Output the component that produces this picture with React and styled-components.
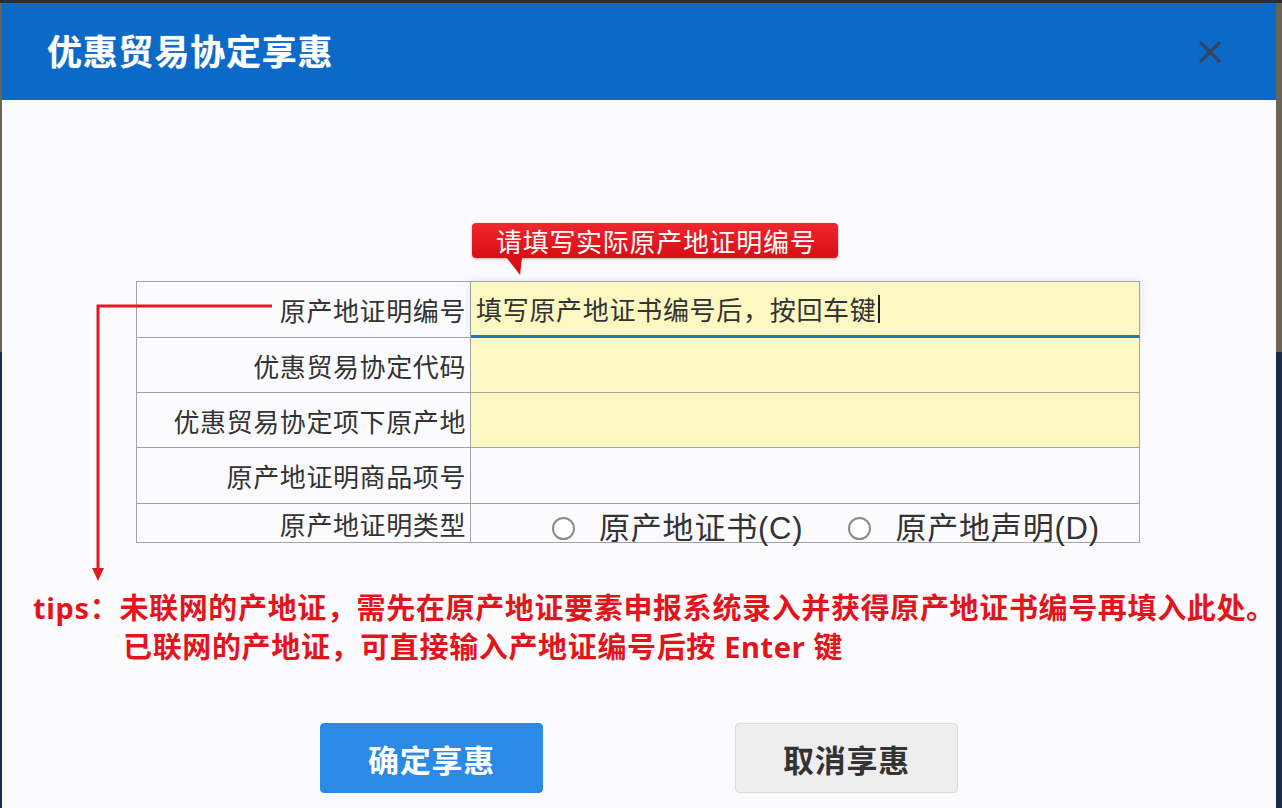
import React from "react";
import styled, { createGlobalStyle } from "styled-components";

const Global = createGlobalStyle`
  html, body { margin: 0; padding: 0; }
  body {
    width: 1282px;
    height: 808px;
    overflow: hidden;
    background: linear-gradient(to bottom, #2e2c2c 0 3px, #6b6358 3px 352px, #1d2c46 352px);
    font-family: "Noto Sans", "Noto Sans CJK SC", sans-serif;
  }
`;

const CJK = `"Noto Sans CJK SC", "Noto Sans", sans-serif`;

const Dialog = styled.div`
  position: relative;
  width: 1274px;
  height: 805px;
  margin: 3px 0 0 2px;
  display: flex;
  flex-direction: column;
  background: #fbfbfd;
`;

const Header = styled.div`
  height: 97px;
  flex: none;
  background: #0b69c7;
  display: flex;
  align-items: center;
  justify-content: space-between;
  padding: 0 52px 0 45px;
`;

const Title = styled.h1`
  margin: 0 0 4px;
  font-family: ${CJK};
  font-size: 35px;
  font-weight: 700;
  color: #ffffff;
  letter-spacing: 0.8px;
  text-shadow: 0 0 1px rgba(255, 255, 255, 0.6);
`;

const Close = styled.button`
  width: 28px;
  height: 28px;
  padding: 0;
  border: 0;
  background: transparent;
  display: flex;
  align-items: center;
  justify-content: center;
`;

const Body = styled.div`
  flex: 1;
  display: flex;
  flex-direction: column;
  padding-top: 123px;
`;

const Form = styled.div`
  margin-left: 134px;
  width: 1004px;
  display: flex;
  flex-direction: column;
`;

const Callout = styled.div`
  position: relative;
  align-self: flex-start;
  margin-left: 336px;
  margin-bottom: 23px;
  height: 35px;
  padding: 0 22px 0 24px;
  display: flex;
  align-items: center;
  border-radius: 4px;
  background: linear-gradient(to bottom, #f0272c, #d90d15);
  box-shadow: 0 1px 3px rgba(120, 0, 0, 0.35);
  font-family: ${CJK};
  font-size: 26px;
  letter-spacing: 0.7px;
  color: #ffffff;
  line-height: 1;
  &::after {
    content: "";
    position: absolute;
    left: 34px;
    top: 34px;
    width: 16px;
    height: 18px;
    background: #d90d15;
    clip-path: polygon(0 0, 100% 0, 88% 100%);
  }
`;

const Table = styled.div`
  display: grid;
  grid-template-columns: 334px minmax(0, 1fr);
  border-top: 1px solid #a3a3a3;
  border-left: 1px solid #a3a3a3;
`;

const Label = styled.div`
  height: ${(p) => p.$h}px;
  box-sizing: border-box;
  border-right: 1px solid #a3a3a3;
  border-bottom: 1px solid #a3a3a3;
  display: flex;
  align-items: center;
  justify-content: flex-end;
  padding-right: 4px;
  font-family: ${CJK};
  font-size: 26px;
  letter-spacing: 0.6px;
  color: #333333;
  background: #fbfbfd;
`;

const Value = styled.div`
  height: ${(p) => p.$h}px;
  box-sizing: border-box;
  border-right: 1px solid #a3a3a3;
  border-bottom: ${(p) => (p.$focus ? "3px solid #2777ae" : "1px solid #a3a3a3")};
  background: ${(p) => (p.$fill ? "#fbf8c2" : "#fbfbfd")};
  display: flex;
  align-items: center;
  padding-left: 5px;
  font-family: ${CJK};
  font-size: 26px;
  letter-spacing: 0.7px;
  color: #333333;
  box-shadow: ${(p) => (p.$focus ? "0 0 8px rgba(120, 150, 190, 0.25)" : "none")};
`;

const Caret = styled.span`
  display: inline-block;
  width: 2px;
  height: 28px;
  margin-left: 1px;
  background: #222;
  vertical-align: middle;
`;

const RadioGroup = styled.div`
  min-width: 0;
  height: 39px;
  box-sizing: border-box;
  border-right: 1px solid #a3a3a3;
  border-bottom: 1px solid #a3a3a3;
  display: flex;
  align-items: flex-end;
  padding-left: 81px;
  background: #fbfbfd;
  overflow: visible;
`;

const RadioOption = styled.label`
  flex: none;
  display: flex;
  align-items: center;
  gap: 24px;
  margin-right: 45px;
  height: 44px;
  margin-bottom: -8px;
  font-family: "Liberation Sans", ${CJK};
  font-size: 31px;
  letter-spacing: 0.8px;
  color: #333333;
  line-height: 1;
  white-space: nowrap;
`;

const RadioCircle = styled.span`
  width: 23px;
  height: 23px;
  box-sizing: border-box;
  border-radius: 50%;
  border: 2px solid #8b8b8b;
  background: #ffffff;
  flex: none;
`;

const Tips = styled.div`
  margin: 45px 0 0 31px;
  font-family: "Noto Sans", "Noto Sans CJK SC", sans-serif;
  font-size: 29px;
  font-weight: 700;
  letter-spacing: 0.65px;
  line-height: 39px;
  color: #e3151c;
  white-space: nowrap;
`;

const TipLine = styled.div`
  padding-left: ${(p) => p.$indent || 0}px;
`;

const Buttons = styled.div`
  margin: 57px 0 0 318px;
  display: flex;
  gap: 192px;
`;

const Button = styled.button`
  width: 223px;
  height: 70px;
  border-radius: 4px;
  font-family: ${CJK};
  font-size: 31px;
  font-weight: 700;
  letter-spacing: 0.8px;
  cursor: pointer;
  border: ${(p) => (p.$primary ? "1px solid #2a89e6" : "1px solid #dcdcdc")};
  background: ${(p) => (p.$primary ? "#2b8ae6" : "#eeeeee")};
  color: ${(p) => (p.$primary ? "#ffffff" : "#333333")};
`;

const Annotation = styled.svg`
  position: absolute;
  left: -2px;
  top: -3px;
  width: 1282px;
  height: 808px;
  pointer-events: none;
`;

export default function App() {
  return (
    <>
      <Global />
      <Dialog>
        <Header>
          <Title>优惠贸易协定享惠</Title>
          <Close aria-label="关闭">
            <svg width="24" height="24" viewBox="0 0 24 24">
              <path d="M3 3 L21 21 M21 3 L3 21" stroke="#34435f" strokeWidth="3.2" strokeLinecap="round" />
            </svg>
          </Close>
        </Header>
        <Body>
          <Form>
            <Callout>请填写实际原产地证明编号</Callout>
            <Table>
              <Label $h={56}>原产地证明编号</Label>
              <Value $h={56} $fill $focus>
                填写原产地证书编号后，按回车键<Caret />
              </Value>
              <Label $h={55}>优惠贸易协定代码</Label>
              <Value $h={55} $fill />
              <Label $h={55}>优惠贸易协定项下原产地</Label>
              <Value $h={55} $fill />
              <Label $h={56}>原产地证明商品项号</Label>
              <Value $h={56} />
              <Label $h={39}>原产地证明类型</Label>
              <RadioGroup>
                <RadioOption>
                  <RadioCircle />
                  <span>原产地证书(C)</span>
                </RadioOption>
                <RadioOption>
                  <RadioCircle />
                  <span>原产地声明(D)</span>
                </RadioOption>
              </RadioGroup>
            </Table>
          </Form>
          <Tips>
            <TipLine>tips：未联网的产地证，需先在原产地证要素申报系统录入并获得原产地证书编号再填入此处。</TipLine>
            <TipLine $indent={90}>已联网的产地证，可直接输入产地证编号后按 Enter 键</TipLine>
          </Tips>
          <Buttons>
            <Button $primary>确定享惠</Button>
            <Button>取消享惠</Button>
          </Buttons>
        </Body>
        <Annotation viewBox="0 0 1282 808">
          <polyline points="272,306 98,306 98,570" fill="none" stroke="#e01b22" strokeWidth="3" />
          <polygon points="92,568 104,568 98,581" fill="#e01b22" />
        </Annotation>
      </Dialog>
    </>
  );
}
